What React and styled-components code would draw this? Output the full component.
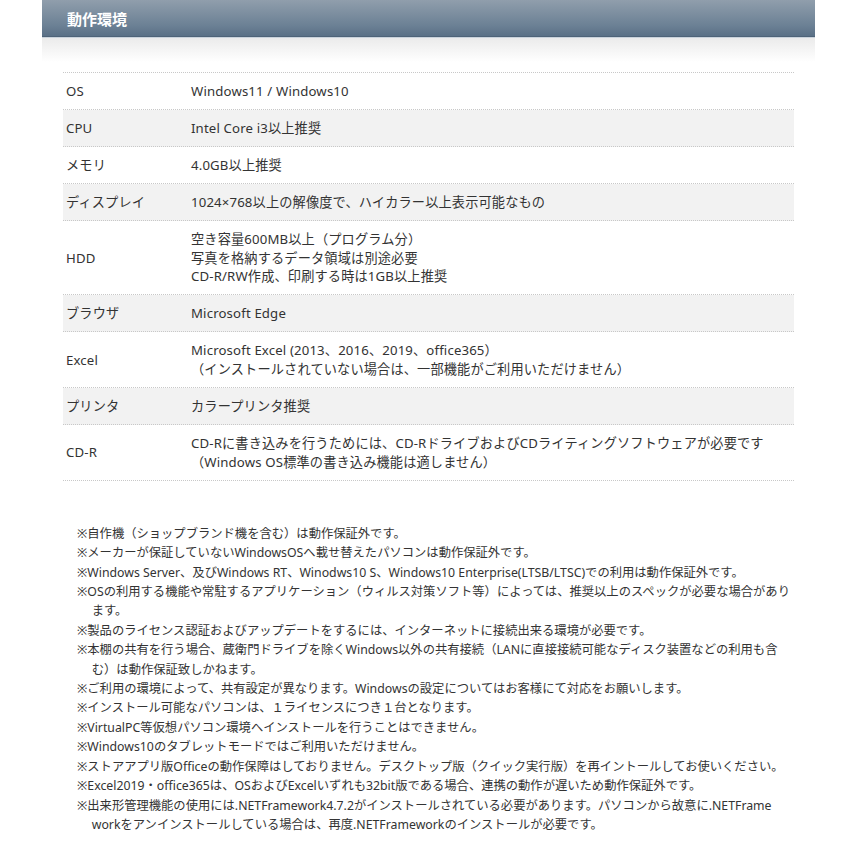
import React from "react";
import styled, { createGlobalStyle } from "styled-components";

const GlobalStyle = createGlobalStyle`
  body {
    margin: 0;
    background: #fff;
    font-family: "Noto Sans", "Noto Sans CJK JP", sans-serif;
    color: #333;
  }
`;

const Page = styled.div`
  width: 773px;
  margin-left: 42px;
  padding-bottom: 20px;
`;

const Heading = styled.h2`
  margin: 0;
  height: 36px;
  padding-left: 25px;
  display: flex;
  align-items: center;
  font-size: 15px;
  font-weight: bold;
  color: #fff;
  background: linear-gradient(#909eac, #6c8195 70%, #5a7086);
  border-bottom: 1px solid #4e6378;
  box-shadow: 0 1px 0 #c9d2db;
`;

const Fade = styled.div`
  height: 24px;
  margin-top: 1px;
  background: linear-gradient(#ebebeb, #fff);
`;

const Table = styled.div`
  margin: 10px 21px 0;
  border-top: 1px dotted #c8c8c8;
  font-size: 13.2px;
  line-height: 18.7px;
  letter-spacing: 0.15px;
`;

const Row = styled.div`
  display: grid;
  grid-template-columns: 125px 1fr;
  align-items: center;
  padding: 9px 3px 8.3px;
  background: ${(p) => (p.$shaded ? "#f2f2f2" : "#fff")};
  border-bottom: 1px dotted #c8c8c8;
`;

const Label = styled.div`
  color: #333;
`;

const Value = styled.div`
  color: #333;
`;

const Notes = styled.ul`
  list-style: none;
  margin: 43px 0 0;
  padding: 0 20px 0 35px;
  font-size: 12.3px;
  line-height: 19.4px;
  color: #333;
`;

const Note = styled.li`
  padding-left: 1.2em;
  text-indent: -1.2em;
`;

const specs = [
  ["OS", ["Windows11 / Windows10"]],
  ["CPU", ["Intel Core i3以上推奨"]],
  ["メモリ", ["4.0GB以上推奨"]],
  ["ディスプレイ", ["1024×768以上の解像度で、ハイカラー以上表示可能なもの"]],
  [
    "HDD",
    [
      "空き容量600MB以上（プログラム分）",
      "写真を格納するデータ領域は別途必要",
      "CD-R/RW作成、印刷する時は1GB以上推奨",
    ],
  ],
  ["ブラウザ", ["Microsoft Edge"]],
  [
    "Excel",
    [
      "Microsoft Excel (2013、2016、2019、office365）",
      "（インストールされていない場合は、一部機能がご利用いただけません）",
    ],
  ],
  ["プリンタ", ["カラープリンタ推奨"]],
  [
    "CD-R",
    [
      "CD-Rに書き込みを行うためには、CD-RドライブおよびCDライティングソフトウェアが必要です",
      "（Windows OS標準の書き込み機能は適しません）",
    ],
  ],
];

const notes = [
  "※自作機（ショップブランド機を含む）は動作保証外です。",
  "※メーカーが保証していないWindowsOSへ載せ替えたパソコンは動作保証外です。",
  "※Windows Server、及びWindows RT、Winodws10 S、Windows10 Enterprise(LTSB/LTSC)での利用は動作保証外です。",
  "※OSの利用する機能や常駐するアプリケーション（ウィルス対策ソフト等）によっては、推奨以上のスペックが必要な場合があります。",
  "※製品のライセンス認証およびアップデートをするには、インターネットに接続出来る環境が必要です。",
  "※本棚の共有を行う場合、蔵衛門ドライブを除くWindows以外の共有接続（LANに直接接続可能なディスク装置などの利用も含む）は動作保証致しかねます。",
  "※ご利用の環境によって、共有設定が異なります。Windowsの設定についてはお客様にて対応をお願いします。",
  "※インストール可能なパソコンは、１ライセンスにつき１台となります。",
  "※VirtualPC等仮想パソコン環境へインストールを行うことはできません。",
  "※Windows10のタブレットモードではご利用いただけません。",
  "※ストアアプリ版Officeの動作保障はしておりません。デスクトップ版（クイック実行版）を再イントールしてお使いください。",
  "※Excel2019・office365は、OSおよびExcelいずれも32bit版である場合、連携の動作が遅いため動作保証外です。",
  "※出来形管理機能の使用には.NETFramework4.7.2がインストールされている必要があります。パソコンから故意に.NETFrame workをアンインストールしている場合は、再度.NETFrameworkのインストールが必要です。",
];

const App = () => {
  return (
    <>
      <GlobalStyle />
      <Page>
        <Heading>動作環境</Heading>
        <Fade />
        <Table>
          {specs.map(([label, lines], i) => (
            <Row key={label} $shaded={i % 2 === 1}>
              <Label>{label}</Label>
              <Value>
                {lines.map((l) => (
                  <div key={l}>{l}</div>
                ))}
              </Value>
            </Row>
          ))}
        </Table>
        <Notes>
          {notes.map((n) => (
            <Note key={n}>{n}</Note>
          ))}
        </Notes>
      </Page>
    </>
  );
};

export default App;
